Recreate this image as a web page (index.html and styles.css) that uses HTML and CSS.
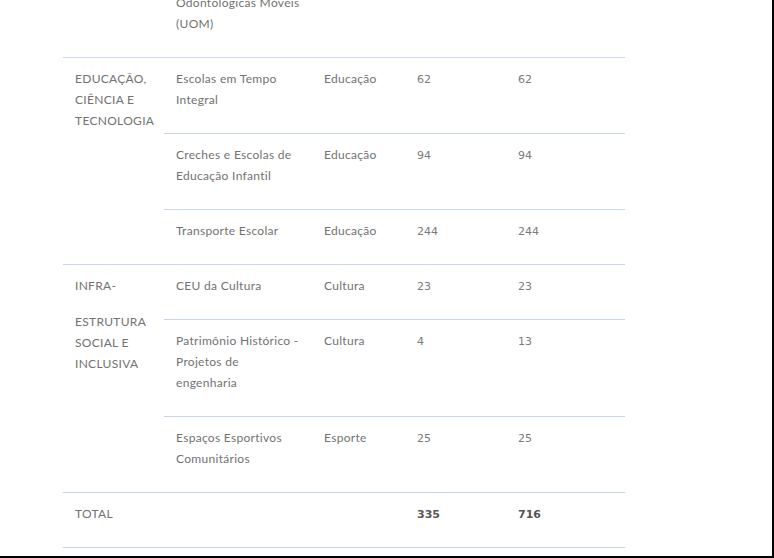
FILE: index.html
```html
<!DOCTYPE html>
<html lang="pt-BR">
<head>
<meta charset="utf-8">
<title>Tabela</title>
<link rel="stylesheet" href="styles.css">
</head>
<body>
<div class="frame">
  <table class="data">
    <colgroup>
      <col class="c-area">
      <col class="c-prog">
      <col class="c-min">
      <col class="c-n1">
      <col class="c-n2">
    </colgroup>
    <tbody>
      <tr>
        <td></td>
        <td>Odontológicas Móveis (UOM)</td>
        <td></td>
        <td class="num"></td>
        <td class="num"></td>
      </tr>
      <tr>
        <td rowspan="3" class="area">EDUCAÇÃO, CIÊNCIA E TECNOLOGIA</td>
        <td>Escolas em Tempo Integral</td>
        <td>Educação</td>
        <td class="num">62</td>
        <td class="num">62</td>
      </tr>
      <tr>
        <td>Creches e Escolas de Educação Infantil</td>
        <td>Educação</td>
        <td class="num">94</td>
        <td class="num">94</td>
      </tr>
      <tr>
        <td>Transporte Escolar</td>
        <td>Educação</td>
        <td class="num">244</td>
        <td class="num">244</td>
      </tr>
      <tr>
        <td rowspan="3" class="area"><span class="part">INFRA-</span><span class="part">ESTRUTURA SOCIAL E INCLUSIVA</span></td>
        <td>CEU da Cultura</td>
        <td>Cultura</td>
        <td class="num">23</td>
        <td class="num">23</td>
      </tr>
      <tr>
        <td>Patrimônio Histórico - Projetos de engenharia</td>
        <td>Cultura</td>
        <td class="num">4</td>
        <td class="num">13</td>
      </tr>
      <tr>
        <td>Espaços Esportivos Comunitários</td>
        <td>Esporte</td>
        <td class="num">25</td>
        <td class="num">25</td>
      </tr>
      <tr class="total">
        <td>TOTAL</td>
        <td></td>
        <td></td>
        <td class="num strong">335</td>
        <td class="num strong">716</td>
      </tr>
    </tbody>
  </table>
</div>
</body>
</html>
```
FILE: styles.css
```css
html, body {
  margin: 0;
  padding: 0;
  background: #fff;
}

.frame {
  box-sizing: border-box;
  width: 774px;
  height: 558px;
  overflow: hidden;
  border-right: 2px solid #000;
  border-bottom: 2px solid #000;
}

.data {
  margin: -18px 0 0 63px;
  width: 562px;
  table-layout: fixed;
  border-collapse: separate;
  border-spacing: 0;
  font-family: "Lato", "Open Sans", sans-serif;
  font-size: 12px;
  line-height: 21px;
  letter-spacing: 0.3px;
  color: #727272;
}

.c-area { width: 101px; }
.c-prog { width: 148px; }
.c-min { width: 93px; }
.c-n1 { width: 101px; }
.c-n2 { width: 119px; }

.data td {
  vertical-align: top;
  text-align: left;
  padding: 10px 10px 23px 12px;
  border-bottom: 1px solid #c9d6ea;
}

.data td.num {
  padding-top: 11px;
  padding-bottom: 22px;
  font-family: "DejaVu Sans", sans-serif;
  font-size: 11px;
  letter-spacing: 0;
  color: #7a7a7a;
}

.data td.strong {
  font-weight: bold;
  color: #555;
}

.part {
  display: block;
}

.part + .part {
  margin-top: 15px;
}
```
